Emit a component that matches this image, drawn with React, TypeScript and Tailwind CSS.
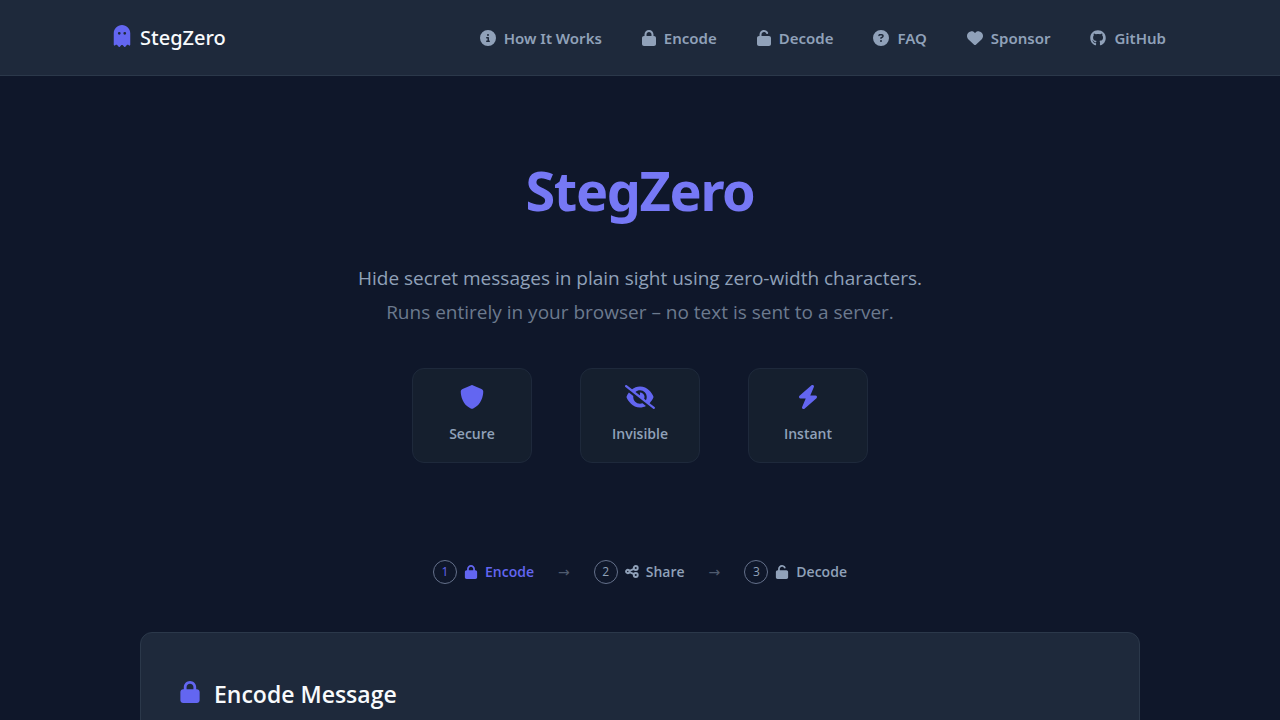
import React from "react";
import { FaGhost, FaCircleInfo, FaLock, FaUnlock, FaCircleQuestion, FaHeart, FaGithub, FaShield, FaEyeSlash, FaBolt } from "react-icons/fa6";

function ShareIcon() {
  return (
    <svg viewBox="0 0 28 28" className="size-[14px]" fill="none" stroke="currentColor" strokeWidth="3.8" aria-hidden="true">
      <circle cx="5.5" cy="13" r="3.4" />
      <circle cx="21.5" cy="6" r="4" />
      <circle cx="21.5" cy="20" r="4" />
      <path d="M9 11.6 18 7.8M9 14.4 18 18.2" />
    </svg>
  );
}

const nav = [
  { label: "How It Works", href: "#how", icon: <FaCircleInfo className="size-4" /> },
  { label: "Encode", href: "#encode", icon: <FaLock className="h-4 w-[14px]" /> },
  { label: "Decode", href: "#decode", icon: <FaUnlock className="h-4 w-[14px]" /> },
  { label: "FAQ", href: "#faq", icon: <FaCircleQuestion className="size-4" /> },
  { label: "Sponsor", href: "#sponsor", icon: <FaHeart className="size-4" /> },
  { label: "GitHub", href: "#github", icon: <FaGithub className="size-4" /> },
];

const features = [
  { label: "Secure", icon: <FaShield className="size-6" /> },
  { label: "Invisible", icon: <FaEyeSlash className="h-6 w-[30px]" /> },
  { label: "Instant", icon: <FaBolt className="size-6" /> },
];

const steps = [
  { label: "Encode", icon: <FaLock className="size-[14px]" /> },
  { label: "Share", icon: <ShareIcon /> },
  { label: "Decode", icon: <FaUnlock className="size-[14px]" /> },
];

export default function App() {
  return (
    <div className="h-screen overflow-hidden bg-[#0f172a] font-['Open_Sans','Noto_Sans',sans-serif] text-slate-400">
      <header className="border-b border-[#2b384a] bg-[#1e293b]">
        <div className="mx-auto flex h-[75px] max-w-[1056px] items-center justify-between pt-px pr-[2px]">
          <a href="#top" className="flex items-center gap-2 font-['Noto_Sans',sans-serif] text-xl font-medium text-slate-50">
            <FaGhost className="mb-1 h-[22px] w-5 text-[#6366f1]" />
            StegZero
          </a>
          <nav className="flex gap-10 font-['Noto_Sans',sans-serif] text-[15px] font-semibold">
            {nav.map((n) => (
              <a key={n.label} href={n.href} className="flex items-center gap-2">
                {n.icon}
                {n.label}
              </a>
            ))}
          </nav>
        </div>
      </header>
      <main>
        <section className="flex flex-col items-center pt-20 text-center">
          <h1 className="font-['Noto_Sans',sans-serif] text-[54px] leading-[68px] font-bold tracking-tight text-[#7678f5]">StegZero</h1>
          <p className="mt-[37px] text-[19px] leading-[34px]">
            Hide secret messages in plain sight using zero-width characters.
            <br />
            <span className="text-[#6c7a8e]">Runs entirely in your browser – no text is sent to a server.</span>
          </p>
          <ul className="mt-[39px] flex gap-12">
            {features.map((f) => (
              <li key={f.label} className="flex h-[95px] w-[120px] flex-col items-center gap-[15px] rounded-xl border border-[#1e293b] bg-[#151f2e] pt-4">
                <span className="text-[#6366f1]">{f.icon}</span>
                <span className="text-sm font-semibold">{f.label}</span>
              </li>
            ))}
          </ul>
        </section>
        <ol className="mt-[97px] flex h-6 items-center justify-center gap-6 text-[13px] font-semibold">
          {steps.map((s, i) => (
            <React.Fragment key={s.label}>
              {i > 0 && <li aria-hidden="true" className="font-['DejaVu_Sans'] text-sm font-normal text-[#4f5b6e]">→</li>}
              <li className={i === 0 ? "flex items-center gap-[7px] text-sm text-[#6366f1]" : "flex items-center gap-[7px] text-sm"}>
                <span className="flex size-6 items-center justify-center rounded-full border border-[#64708a] text-xs font-normal">{i + 1}</span>
                {s.icon}
                {s.label}
              </li>
            </React.Fragment>
          ))}
        </ol>
        <section id="encode" className="mx-auto mt-12 min-h-40 max-w-[1000px] rounded-xl border border-[#2b384a] bg-[#1e293b] px-[39px] py-[45px]">
          <h2 className="flex items-center gap-[14px] text-[23px] leading-8 font-semibold text-slate-50">
            <FaLock className="mb-1 h-[22px] w-5 text-[#6366f1]" />
            Encode Message
          </h2>
        </section>
      </main>
    </div>
  );
}
